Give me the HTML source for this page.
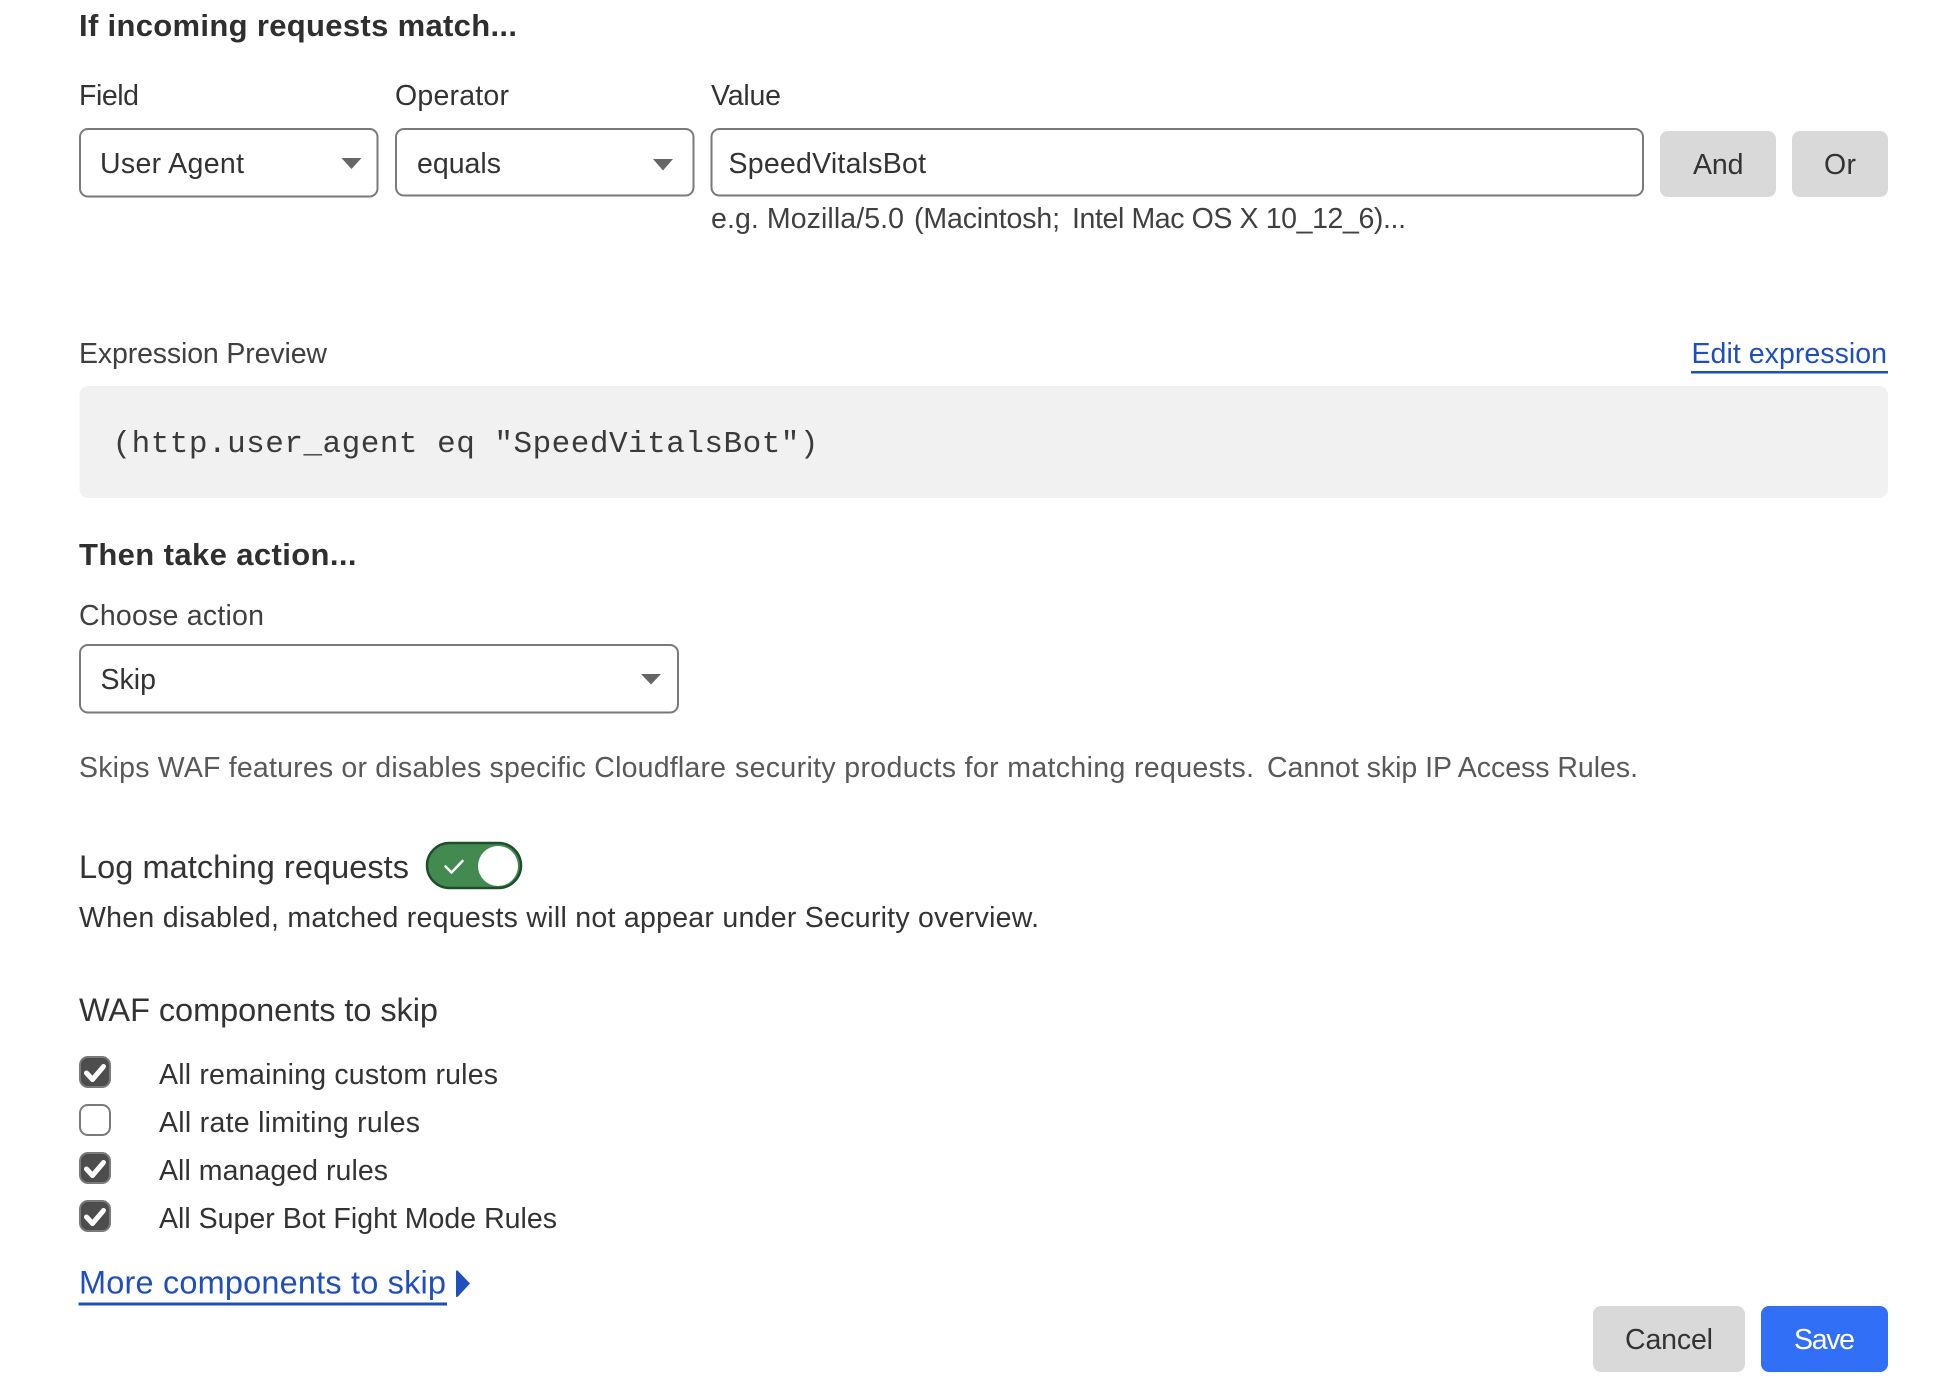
<!DOCTYPE html>
<html lang="en">
<head>
<meta charset="utf-8">
<title>Rule editor</title>
<style>
html,body{margin:0;padding:0;background:#fff;width:1940px;height:1396px;overflow:hidden}
svg{display:block}
text{font-family:"Liberation Sans",sans-serif;fill:#333;font-size:28.5px}
.h{font-weight:700;font-size:31px;fill:#2f2f2f}
.lg{font-size:32.5px}
.sm{fill:#404040}
.d{fill:#595959}
.l{fill:#1f4fbf}
.m{font-family:"Liberation Mono",monospace;font-size:31px;fill:#3a3a3a}
.box{fill:#fff;stroke:#7a7a7a;stroke-width:2}
.btn{fill:#d9d9d9}
.car{fill:#666}
.cb{fill:#4d4d4d;stroke:#7a7a7a;stroke-width:2}
.ck{fill:none;stroke:#fff;stroke-width:5;stroke-linecap:round;stroke-linejoin:round}
</style>
</head>
<body>
<svg width="1940" height="1396" viewBox="0 0 1940 1396" xmlns="http://www.w3.org/2000/svg">
<text class="h" x="79" y="36" textLength="438" lengthAdjust="spacing">If incoming requests match...</text>

<text x="79" y="105" textLength="60" lengthAdjust="spacing">Field</text>
<text x="395" y="105" textLength="114" lengthAdjust="spacing">Operator</text>
<text x="711" y="105" textLength="70" lengthAdjust="spacing">Value</text>

<rect class="box" x="80" y="129" width="297.500" height="67.500" rx="8"/>
<text x="100" y="173" textLength="144" lengthAdjust="spacing">User Agent</text>
<path class="car" d="M341.500 158h20l-10 11z"/>

<rect class="box" x="396" y="129" width="297.500" height="66.500" rx="8"/>
<text x="417" y="173" textLength="84" lengthAdjust="spacing">equals</text>
<path class="car" d="M653 159h20l-10 11.500z"/>

<rect class="box" x="711.500" y="129" width="931.500" height="66.500" rx="8"/>
<text x="728.500" y="173" textLength="197.500" lengthAdjust="spacing">SpeedVitalsBot</text>

<rect class="btn" x="1660" y="131" width="116" height="66" rx="8"/>
<text x="1693" y="174" textLength="50.500" lengthAdjust="spacing">And</text>
<rect class="btn" x="1792" y="131" width="96" height="66" rx="8"/>
<text x="1824" y="174" textLength="32" lengthAdjust="spacing">Or</text>

<text class="sm" x="711" y="228" textLength="193" lengthAdjust="spacing">e.g. Mozilla/5.0</text>
<text class="sm" x="914" y="228" textLength="146" lengthAdjust="spacing">(Macintosh;</text>
<text class="sm" x="1072" y="228" textLength="334" lengthAdjust="spacing">Intel Mac OS X 10_12_6)...</text>

<text class="sm" x="79" y="363" textLength="248" lengthAdjust="spacing">Expression Preview</text>
<text class="l" x="1691.500" y="363" textLength="195.500" lengthAdjust="spacing">Edit expression</text>
<rect x="1691" y="371" width="197" height="2.500" fill="#1f4fbf"/>

<rect x="79.500" y="386" width="1808.500" height="112" rx="9" fill="#f1f1f1"/>
<text class="m" x="112.500" y="452" textLength="706" lengthAdjust="spacing">(http.user_agent eq "SpeedVitalsBot")</text>

<text class="h" x="79" y="565" textLength="277.500" lengthAdjust="spacing">Then take action...</text>
<text class="sm" x="79" y="625" textLength="185" lengthAdjust="spacing">Choose action</text>

<rect class="box" x="80" y="645" width="598" height="67.500" rx="8"/>
<text x="100.500" y="689" textLength="55.500" lengthAdjust="spacing">Skip</text>
<path class="car" d="M641 674h20l-10 10.500z"/>

<text class="d" x="79" y="777" textLength="647" lengthAdjust="spacing">Skips WAF features or disables specific Cloudflare</text>
<text class="d" x="735" y="777" textLength="519" lengthAdjust="spacing">security products for matching requests.</text>
<text class="d" x="1267" y="777" textLength="371" lengthAdjust="spacing">Cannot skip IP Access Rules.</text>

<text class="lg" x="79" y="878" textLength="330" lengthAdjust="spacing">Log matching requests</text>
<rect x="427" y="843" width="94" height="45" rx="22.500" fill="#438a50" stroke="#1d4f2b" stroke-width="2.500"/>
<circle cx="498" cy="866" r="20" fill="#fff"/>
<path d="M445.500 866.500l6 6 11-11.500" fill="none" stroke="#fff" stroke-width="2.500" stroke-linecap="round" stroke-linejoin="round"/>

<text x="79" y="927" textLength="960" lengthAdjust="spacing">When disabled, matched requests will not appear under Security overview.</text>

<text class="lg" x="79" y="1021" textLength="359" lengthAdjust="spacing">WAF components to skip</text>

<rect class="cb" x="80" y="1057" width="30" height="30" rx="8"/>
<path class="ck" d="M86.500 1073l6 6.500 11-13"/>
<text x="159" y="1084" textLength="339" lengthAdjust="spacing">All remaining custom rules</text>

<rect x="80" y="1105" width="30" height="30" rx="8" fill="#fff" stroke="#7a7a7a" stroke-width="2"/>
<text x="159" y="1132" textLength="261" lengthAdjust="spacing">All rate limiting rules</text>

<rect class="cb" x="80" y="1153" width="30" height="30" rx="8"/>
<path class="ck" d="M86.500 1169l6 6.500 11-13"/>
<text x="159" y="1180" textLength="229" lengthAdjust="spacing">All managed rules</text>

<rect class="cb" x="80" y="1201" width="30" height="30" rx="8"/>
<path class="ck" d="M86.500 1217l6 6.500 11-13"/>
<text x="159" y="1228" textLength="398" lengthAdjust="spacing">All Super Bot Fight Mode Rules</text>

<text class="l lg" x="79" y="1293.500" textLength="367" lengthAdjust="spacing">More components to skip</text>
<rect x="78.500" y="1302.500" width="368.500" height="3" fill="#1f4fbf"/>
<path d="M456 1271.500q0-2 2-.5l12 12.500-12 13q-2 1.500-2-.5z" fill="#1f4fbf"/>

<rect class="btn" x="1593" y="1306" width="152" height="66" rx="8"/>
<text x="1625" y="1349" textLength="88" lengthAdjust="spacing">Cancel</text>
<rect x="1761" y="1306" width="127" height="66" rx="8" fill="#316ff6"/>
<text x="1794" y="1349" textLength="61" lengthAdjust="spacing" style="fill:#fff">Save</text>
</svg>
</body>
</html>
